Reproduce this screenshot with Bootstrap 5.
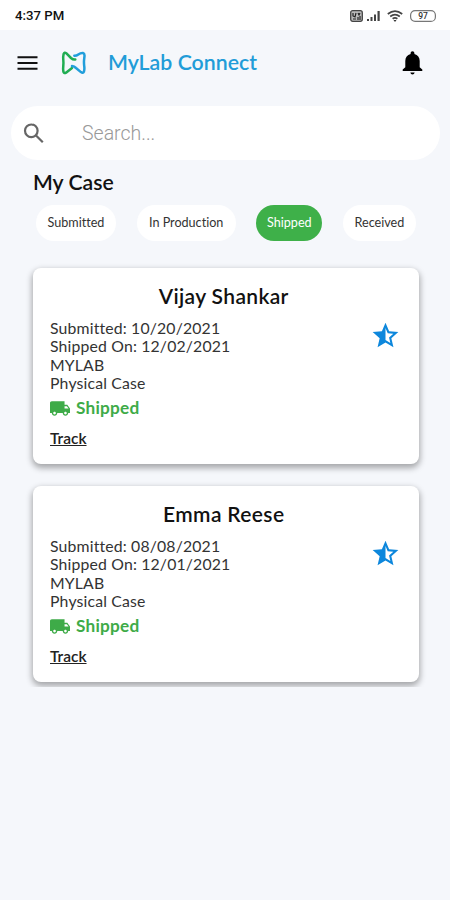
<!DOCTYPE html>
<html lang="en">
<head>
<meta charset="utf-8">
<meta name="viewport" content="width=device-width, initial-scale=1">
<title>MyLab Connect</title>
<link rel="stylesheet" href="https://cdn.jsdelivr.net/npm/bootstrap@5.3.0/dist/css/bootstrap.min.css">
<style>
body{font-family:Lato,sans-serif;font-variant-ligatures:none;background:#f5f7fb;color:#111;height:900px;overflow:hidden}
svg{display:block;flex:none}
.status-bar{height:30px;padding:1px 14px 0 15px;font:500 13.2px Roboto,sans-serif}
.status-icons{gap:7px}
.app-bar{height:66px;padding:0 27px 0 17px}
.brand-name{font-size:21.3px;font-weight:600;color:#219cd8;line-height:1;margin-left:22px}
.brand-logo{margin-left:23px}
.search-box{height:54px;margin:10px 10px 0 11px;padding-left:12px}
.search-box input{font:300 19.5px Roboto,sans-serif;margin-left:36px;padding:0;color:#444}
.search-box input::placeholder{color:#999;opacity:1}
.section-title{font-size:21.2px;font-weight:600;line-height:24px;margin:10px 0 0 33px}
.filters{margin:11px 34px 0 36px;height:36px}
.filters .btn{--bs-btn-font-size:12.6px;--bs-btn-bg:#fff;--bs-btn-color:#333;--bs-btn-padding-x:0;--bs-btn-padding-y:0;--bs-btn-border-width:0;height:36px;line-height:36px;font-variant-ligatures:none}
.filters .btn.active{--bs-btn-active-bg:#3eb049;--bs-btn-active-color:#fff}
.w-sub{width:80px}.w-prod{width:99px}.w-ship{width:66px}.w-rec{width:73px}
.case-list{padding:27px 31.5px 5.5px 33px;height:446px;overflow:hidden;display:grid;row-gap:22.5px;align-content:start}
.case-card{--bs-card-border-width:0;--bs-card-border-radius:8px;height:195.5px;box-shadow:0 3px 6px 1px rgba(0,0,0,.33)}
.case-card .card-body{padding:17px 17px 0}
.case-name{font-size:21px;font-weight:600;line-height:22px;letter-spacing:.35px;margin:0 4px 12px 0}
.case-info{font-size:15.8px;line-height:18.3px;letter-spacing:.16px;color:#333}
.case-state{font-size:17.2px;font-weight:700;line-height:20px;letter-spacing:.22px;color:#3eab48;margin-top:6px}
.case-state svg{margin-right:6px}
.case-track{font-size:15.5px;font-weight:600;line-height:18px;color:#222;margin-top:10.5px;display:inline-block}
.star{margin:3px 3px 0 0}
</style>
</head>
<body>
<svg class="d-none">
<symbol id="star" viewBox="0 0 24 24"><path d="M22 9.240l-7.190-.62L12 2 9.190 8.630 2 9.240l5.460 4.730L5.820 21 12 17.270 18.180 21l-1.630-7.030L22 9.240zM12 15.400V6.100l1.710 4.040 4.380.38-3.320 2.880 1 4.280L12 15.400z"/></symbol>
<symbol id="truck" viewBox="1 4 22 16"><path fill-rule="evenodd" d="M20 8h-3V4H3C1.900 4 1 4.900 1 6v11h2c0 1.660 1.340 3 3 3s3-1.340 3-3h6c0 1.660 1.340 3 3 3s3-1.340 3-3h2v-5l-3-4zM6 18.500c-.83 0-1.500-.67-1.500-1.500s.67-1.500 1.500-1.500 1.500.67 1.500 1.500-.67 1.500-1.500 1.500zm13.500-9l1.960 2.500H17V9.500h2.500zm-1.500 9c-.83 0-1.500-.67-1.500-1.500s.67-1.500 1.500-1.500 1.500.67 1.500 1.500-.67 1.500-1.500 1.500z"/></symbol>
</svg>
<div class="status-bar bg-white d-flex align-items-center justify-content-between">
  <span>4:37 PM</span>
  <div class="status-icons d-flex align-items-center">
    <div class="d-flex align-items-center gap-1">
      <svg width="13" height="12" viewBox="0 0 13 12"><rect x=".7" y=".7" width="11.600" height="10.600" rx="2" fill="#bbb" stroke="#444" stroke-width="1.300"/><path d="M3 3v3l2 1 1-4M8 3l1 2 1-2M3 9h3M8 7v3M10 6v4" fill="none" stroke="#222" stroke-width="1.200"/></svg>
      <svg width="13" height="11" viewBox="0 0 13 11"><path d="M0 9h2v2H0zM3.500 7h2v4h-2zM7 4.500h2V11H7zM10.500 1h2.200v10h-2.200z" fill="#444"/></svg>
    </div>
    <svg width="16" height="12" viewBox="0 0 16 12"><g fill="none" stroke="#444" stroke-width="1.700"><path d="M.8 4Q8-1.800 15.200 4M3.200 6.500q4.800-3.700 9.600 0M5.600 8.800q2.400-1.800 4.800 0"/></g><path d="M6.500 10h3L8 12z" fill="#333"/></svg>
    <svg width="26" height="12" viewBox="0 0 26 12"><rect x=".6" y=".6" width="24.800" height="10.800" rx="4.500" fill="#fff" stroke="#777" stroke-width="1.200"/><text x="13" y="9" text-anchor="middle" font-family="Roboto,sans-serif" font-size="8.500" font-weight="500" fill="#333">97</text></svg>
  </div>
</div>
<header class="app-bar d-flex align-items-center">
  <svg width="21" height="14" viewBox="0 0 21 14"><path d="M.5 1.200h20M.5 7h20M.5 12.800h20" stroke="#111" stroke-width="2"/></svg>
  <svg class="brand-logo" width="25" height="24" viewBox="0 0 25 24"><g fill="none" stroke-width="2.500" stroke-linecap="round" stroke-linejoin="round"><path d="M14.300 8.500Q12 8.800 10 7L5.200 2.200Q3.500.8 2.600 3q-.7 3-.3 6 .3 3 0 5.500-.4 3.500.1 6.300.8 1.900 2.600.9L11 17" stroke="#20ad52"/><path d="M13.300 4.800q2.200.1 4-1.300 2.300-1.700 4.700-1.500 1.700.4 1.500 3-.3 2.500-.5 4.800-.1 2.600.2 5 .5 3.400-.3 6-.9 1.800-3 .3L15 17q-1.700-1.700-4-1.900" stroke="#219edb"/></g></svg>
  <h1 class="brand-name mb-0">MyLab Connect</h1>
  <svg class="ms-auto" width="21" height="24" viewBox="0 0 21 24"><path d="M10.500.3c-1.100 0-1.900.8-1.900 1.900v.7C5.200 3.800 3.300 6.400 3.300 10v6.300L.7 18.500V20h19.600v-1.500l-2.600-2.200V10c0-3.600-1.900-6.200-5.300-7.100v-.7c0-1.100-.8-1.900-1.900-1.900zM8.300 21.500h4.400q-.4 2-2.200 2t-2.200-2z" fill="#000"/></svg>
</header>
<div class="search-box bg-white rounded-pill d-flex align-items-center">
  <svg width="23" height="23" viewBox="0 0 23 23"><g fill="none" stroke="#666" stroke-width="2.200"><circle cx="8.300" cy="8.800" r="6.300"/><path d="M12.800 13.300l7 7"/></g></svg>
  <input class="form-control border-0 bg-transparent shadow-none" type="text" placeholder="Search..." aria-label="Search">
</div>
<h2 class="section-title">My Case</h2>
<div class="filters d-flex justify-content-between">
  <button class="btn rounded-pill w-sub">Submitted</button>
  <button class="btn rounded-pill w-prod">In Production</button>
  <button class="btn rounded-pill w-ship active">Shipped</button>
  <button class="btn rounded-pill w-rec">Received</button>
</div>
<main class="case-list">
  <article class="card case-card"><div class="card-body">
    <h3 class="case-name text-center">Vijay Shankar</h3>
    <div class="d-flex justify-content-between">
      <div class="case-info">Submitted: 10/20/2021<br>Shipped On: 12/02/2021<br>MYLAB<br>Physical Case</div>
      <svg class="star" width="27" height="26" viewBox="1.500 1.500 21 20" fill="#0d87dc"><use href="#star" width="24" height="24"/></svg>
    </div>
    <div class="case-state d-flex align-items-center"><svg width="20" height="15" fill="#3eab48"><use href="#truck"/></svg>Shipped</div>
    <a class="case-track" href="#">Track</a>
  </div></article>
  <article class="card case-card"><div class="card-body">
    <h3 class="case-name text-center">Emma Reese</h3>
    <div class="d-flex justify-content-between">
      <div class="case-info">Submitted: 08/08/2021<br>Shipped On: 12/01/2021<br>MYLAB<br>Physical Case</div>
      <svg class="star" width="27" height="26" viewBox="1.500 1.500 21 20" fill="#0d87dc"><use href="#star" width="24" height="24"/></svg>
    </div>
    <div class="case-state d-flex align-items-center"><svg width="20" height="15" fill="#3eab48"><use href="#truck"/></svg>Shipped</div>
    <a class="case-track" href="#">Track</a>
  </div></article>
</main>
<script src="https://cdn.jsdelivr.net/npm/bootstrap@5.3.0/dist/js/bootstrap.bundle.min.js"></script>
</body>
</html>
